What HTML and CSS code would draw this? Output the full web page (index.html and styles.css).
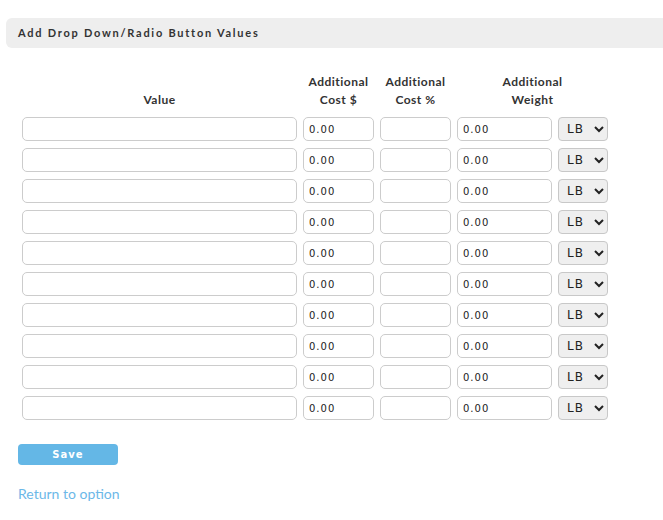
FILE: index.html
```html
<!DOCTYPE html>
<html lang="en">
<head>
    <meta charset="UTF-8">
    <title>Add Drop Down/Radio Button Values</title>
    <link rel="stylesheet" href="styles.css">
</head>
<body>
    <div class="page">
        <div class="bar">Add Drop Down/Radio Button Values</div>

        <div class="grid" id="grid">
            <div class="head">Value</div>
            <div class="head">Additional<br>Cost $</div>
            <div class="head">Additional<br>Cost %</div>
            <div class="head wide">Additional<br>Weight</div>
        </div>

        <button class="save">Save</button>
        <a class="back" href="#">Return to option</a>
    </div>

    <script>
        var grid = document.getElementById("grid");
        // 10 rows of inputs
        for (var i = 0; i < 10; i++) {
            grid.insertAdjacentHTML("beforeend",
                '<input class="txt" type="text">' +
                '<input class="txt" type="text" value="0.00">' +
                '<input class="txt" type="text">' +
                '<input class="txt" type="text" value="0.00">' +
                '<select class="unit"><option>LB</option><option>KG</option></select>');
        }
    </script>
</body>
</html>
```

FILE: styles.css
```css
*{
    margin:0;
    padding:0;
    box-sizing: border-box;
}
body{
    font-family: Lato, "Liberation Sans", sans-serif;
    color:#333;
    background:#fff;
}
.page{
    padding:18px 0 0 6px;
}
.bar{
    height:30px;
    line-height:30px;
    background:#eeeeee;
    border-radius:6px 0 0 6px;
    padding-left:12px;
    font-size:11px;
    font-weight:bold;
    letter-spacing:1.75px;
}

.grid{
    display:grid;
    grid-template-columns: 275px 71px 71px 95px 50px;
    column-gap:6px;
    row-gap:7px;
    margin:26px 0 0 16px;
    grid-auto-rows:24px;
    grid-template-rows:36px;
}
.head{
    align-self:end;
    text-align:center;
    font-size:12px;
    font-weight:bold;
    line-height:18px;
    letter-spacing:0.5px;
    position:relative;
    top:-1px;
}
.head.wide{
    grid-column: span 2;
}
.txt{
    height:24px;
    border:1px solid #cccccc;
    border-radius:5px;
    padding-left:5px;
    font-family: "DejaVu Sans", sans-serif;
    font-size:10px;
    letter-spacing:1px;
    color:#222;
    outline:none;
}
.unit{
    height:24px;
    border:1px solid #c8c8c8;
    border-radius:4px;
    background:#efefef;
    font-family: "DejaVu Sans", sans-serif;
    font-size:12px;
    letter-spacing:1px;
    color:#222;
    padding-left:4px;
}

.save{
    display:block;
    width:100px;
    height:21px;
    margin:24px 0 0 12px;
    border:none;
    border-radius:4px;
    background:#64b7e6;
    color:#fff;
    font-family: "DejaVu Sans", sans-serif;
    font-size:10px;
    font-weight:bold;
    letter-spacing:1px;
}
.back{
    display:inline-block;
    margin:20px 0 0 12px;
    font-size:14px;
    color:#6cb8e8;
    text-decoration:none;
}
```
